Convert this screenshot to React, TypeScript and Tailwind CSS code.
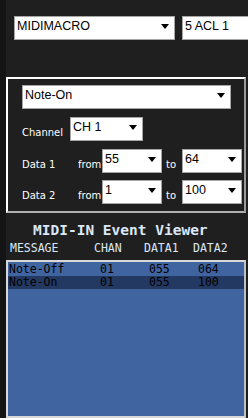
const sans = "font-['Liberation_Sans',Arial,sans-serif]";
const mono = "font-['DejaVu_Sans_Mono',monospace]";

function Arrow() {
  return (
    <svg width="8" height="5" viewBox="0 0 8 5" className="shrink-0">
      <path d="M0 0H8L4 5Z" fill="#000" />
    </svg>
  );
}

function Select({ value, className }: { value: string; className: string }) {
  return (
    <div
      className={`h-[24px] bg-white border border-[#a6a6a6] flex items-start justify-between pl-[2px] pr-[5px] pt-[2px] ${sans} text-[12.5px] leading-[15px] text-black ${className}`}
    >
      <span className="whitespace-nowrap">{value}</span>
      <span className="mt-[5px]">
        <Arrow />
      </span>
    </div>
  );
}

function Label({ text, className }: { text: string; className: string }) {
  return (
    <span
      className={`mb-[2px] font-['DejaVu_Sans',sans-serif] text-[10px] leading-[13px] text-white whitespace-nowrap ${className}`}
    >
      {text}
    </span>
  );
}

const events = [
  { msg: "Note-Off", chan: "01", d1: "055", d2: "064", selected: false },
  { msg: "Note-On", chan: "01", d1: "055", d2: "100", selected: true },
];

export default function App() {
  return (
    <div className="w-[248px] h-[418px] bg-[#141414] flex overflow-hidden">
      <div className="ml-[6px] flex-1 bg-[#1f1f1f] flex flex-col overflow-hidden">
        <div className="flex pt-[16px] pl-[8px] gap-[7px]">
          <Select value="MIDIMACRO" className="w-[161px] shrink-0" />
          <Select value="5 ACL 1" className="w-[80px] shrink-0" />
        </div>

        <div className="mt-[37px] w-[240px] border-2 border-t-white border-l-white border-r-[#9a9a9a] border-b-[#b0b0b0] pl-[14px] pt-[6px] pb-[7px] flex flex-col">
          <Select value="Note-On" className="w-[209px]" />
          <div className="flex items-end mt-[8px]">
            <Label text="Channel" className="w-[48px]" />
            <Select value="CH 1" className="w-[73px]" />
          </div>
          <div className="flex items-end mt-[8px]">
            <Label text="Data 1" className="w-[56px]" />
            <Label text="from" className="w-[24px]" />
            <Select value="55" className="w-[60px]" />
            <Label text="to" className="ml-[4px] w-[16px]" />
            <Select value="64" className="w-[60px]" />
          </div>
          <div className="flex items-end mt-[7px]">
            <Label text="Data 2" className="w-[56px]" />
            <Label text="from" className="w-[24px]" />
            <Select value="1" className="w-[60px]" />
            <Label text="to" className="ml-[4px] w-[16px]" />
            <Select value="100" className="w-[60px]" />
          </div>
        </div>

        <div className={`pl-[27px] pt-[8px] ${mono} font-bold text-[14.5px] leading-[18px] text-[#dce8f8] whitespace-nowrap`}>
          MIDI-IN Event Viewer
        </div>
        <div className={`flex pl-[4px] mt-[2px] ${mono} text-[11.5px] leading-[14px] text-[#dce8f8] whitespace-nowrap`}>
          <span className="w-[84px]">MESSAGE</span>
          <span className="w-[50px]">CHAN</span>
          <span className="w-[49px]">DATA1</span>
          <span>DATA2</span>
        </div>

        <div className="mt-[5px] w-[240px] h-[163px] border-2 border-[#d8d8d8] border-r-[#c0c0c0] bg-[#4064a0] flex flex-col pt-[1px]">
          {events.map((e) => (
            <div
              key={e.msg}
              className={`flex h-[13px] pl-[1px] ${mono} text-[11.5px] leading-[13px] text-black whitespace-nowrap ${e.selected ? "bg-[#233961]" : ""}`}
            >
              <span className="w-[91px]">{e.msg}</span>
              <span className="w-[49px]">{e.chan}</span>
              <span className="w-[49px]">{e.d1}</span>
              <span>{e.d2}</span>
            </div>
          ))}
        </div>
      </div>
    </div>
  );
}
